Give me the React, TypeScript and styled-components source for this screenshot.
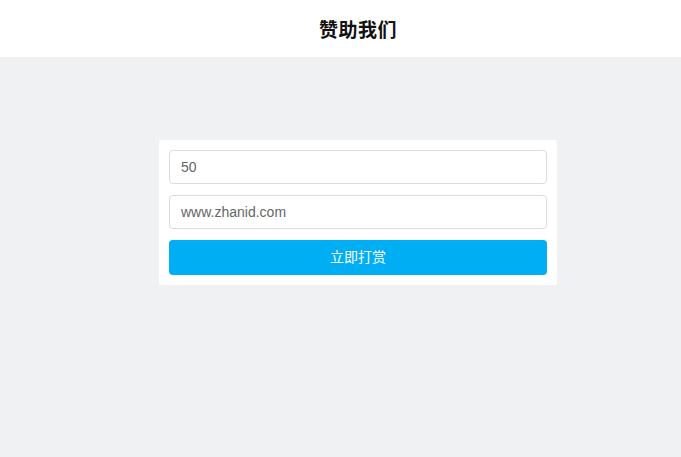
import React from 'react'
import styled, { createGlobalStyle } from 'styled-components'

const GlobalStyle = createGlobalStyle`
  html, body {
    margin: 0;
    padding: 0;
    background: #f0f1f3;
    font-family: "Liberation Sans", Arial, "Noto Sans CJK SC", sans-serif;
  }
`

const Page = styled.div`
  min-height: 457px;
  display: flex;
  flex-direction: column;
`

const Header = styled.header`
  height: 57px;
  background: #ffffff;
  display: flex;
  align-items: center;
  justify-content: center;
  padding-left: 35px;
`

const Title = styled.h1`
  margin: 0;
  font-size: 19px;
  font-weight: bold;
  color: #111;
  letter-spacing: 0.5px;
  font-family: "Noto Sans CJK SC", sans-serif;
`

const Main = styled.main`
  display: flex;
  justify-content: center;
  padding: 83px 0 0 35px;
`

const Card = styled.form`
  width: 398px;
  box-sizing: border-box;
  background: #ffffff;
  padding: 10px;
  display: flex;
  flex-direction: column;
  gap: 11px;
  border-radius: 2px;
`

const Field = styled.input`
  height: 34px;
  box-sizing: border-box;
  border: 1px solid #dcdcdc;
  border-radius: 4px;
  padding: 0 11px;
  font-size: 14px;
  color: #666;
  font-family: "Liberation Sans", Arial, sans-serif;
  outline: none;
  background: #fff;
`

const Submit = styled.button`
  height: 35px;
  border: none;
  border-radius: 4px;
  background: #00aef4;
  color: #fff;
  font-size: 14px;
  line-height: 1;
  padding: 0 0 3px;
  font-family: "Noto Sans CJK SC", sans-serif;
  cursor: pointer;
`

const App = () => {
  return (
    <Page>
      <GlobalStyle />
      <Header>
        <Title>赞助我们</Title>
      </Header>
      <Main>
        <Card onSubmit={(e) => e.preventDefault()}>
          <Field defaultValue="50" />
          <Field defaultValue="www.zhanid.com" />
          <Submit type="submit">立即打赏</Submit>
        </Card>
      </Main>
    </Page>
  )
}

export default App
